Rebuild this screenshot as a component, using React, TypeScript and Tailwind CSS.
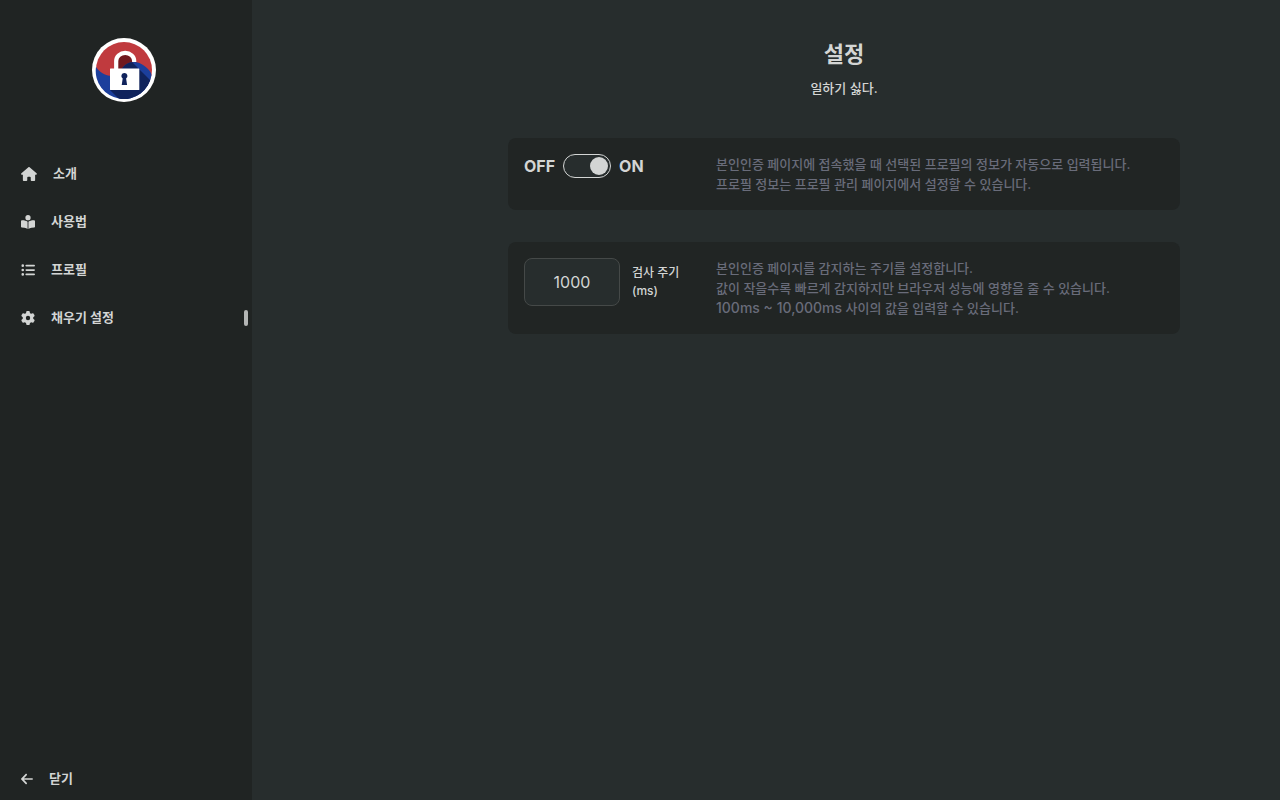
import { useState } from "react";
import type { ReactNode } from "react";
import { FaArrowLeft, FaBookOpenReader, FaGear, FaHouse, FaListUl } from "react-icons/fa6";

function Logo() {
  return (
    <svg viewBox="0 0 64 64" className="size-16" role="img" aria-label="로고">
      <defs>
        <clipPath id="blue">
          <path d="M4 29C10 38 22 41 28 34C33 23 44 22 51 27C56 30 59 34 59.500 37A28 28 0 0 1 4 29Z" />
        </clipPath>
      </defs>
      <circle cx="32" cy="32" r="32" fill="#fff" />
      <circle cx="32" cy="32" r="28" fill="#c03a3e" />
      <path d="M26 31V21Q33 12 40 21V24H44L51 31Z" fill="#70191f" />
      <path d="M4 29C10 38 22 41 28 34C33 23 44 22 51 27C56 30 59 34 59.500 37A28 28 0 0 1 4 29Z" fill="#1c3f9c" />
      <g clipPath="url(#blue)">
        <path d="M26 20L40 24L64 48V72H38L18 52V31H26Z" fill="#10235c" />
      </g>
      <path d="M24.200 32V23A9 8.200 0 0 1 42.200 23V24" fill="none" stroke="#fff" strokeWidth="4.200" />
      <rect x="18" y="30.500" width="29.300" height="21.500" rx="0.500" fill="#fff" />
      <path d="M32.400 35a3 3 0 0 1 1.700 5.500l1 6.500h-5.400l1-6.500A3 3 0 0 1 32.400 35Z" fill="#10235c" />
    </svg>
  );
}

type NavItemProps = { icon: ReactNode; label: string; active?: boolean };

function NavItem({ icon, label, active = false }: NavItemProps) {
  return (
    <a
      href="#"
      aria-current={active ? "page" : undefined}
      className="flex h-12 items-center gap-4 pl-[21px] text-[13px] font-bold"
    >
      {icon}
      <span>{label}</span>
      {active && <span className="ml-auto h-4 w-1 rounded-full bg-[#b4b6b5]" />}
    </a>
  );
}

function Card({ control, children }: { control: ReactNode; children: ReactNode }) {
  return (
    <section className="flex rounded-lg bg-[#212524] p-4">
      <div className="w-48 shrink-0">{control}</div>
      <div className="text-[13px] leading-5 font-medium text-[#696c7a]">{children}</div>
    </section>
  );
}

export default function App() {
  const [enabled, setEnabled] = useState(true);
  const [interval, setInterval] = useState("1000");

  return (
    <div className="flex min-h-screen bg-[#272d2d] font-['Inter','Noto_Sans_CJK_KR',sans-serif] text-[#d3d5d4]">
      <aside className="flex w-[252px] shrink-0 flex-col bg-[#202423] pr-1">
        <div className="flex justify-center pt-[38px] pb-12">
          <Logo />
        </div>
        <nav className="flex flex-col">
          <NavItem icon={<FaHouse className="h-3.5 w-4" />} label="소개" />
          <NavItem icon={<FaBookOpenReader className="size-3.5" />} label="사용법" />
          <NavItem icon={<FaListUl className="size-3.5" />} label="프로필" />
          <NavItem icon={<FaGear className="size-3.5" />} label="채우기 설정" active />
        </nav>
        <button type="button" className="mt-auto flex h-[42px] items-center gap-4 pl-[21px] text-[13px] font-bold">
          <FaArrowLeft className="h-3.5 w-3" />
          <span>닫기</span>
        </button>
      </aside>

      <main className="min-w-0 flex-1 pr-4 pl-64">
        <div className="max-w-2xl">
          <header className="pt-9 text-center">
            <h1 className="text-[22px] leading-9 font-bold">설정</h1>
            <p className="mt-1 text-[13px] leading-6 font-medium">일하기 싫다.</p>
          </header>

          <div className="mt-[38px] flex flex-col gap-8">
            <Card
              control={
                <label className="flex h-6 items-center gap-2 font-bold">
                  <span>OFF</span>
                  <input
                    type="checkbox"
                    role="switch"
                    aria-label="자동 입력"
                    checked={enabled}
                    onChange={(e) => setEnabled(e.target.checked)}
                    className="flex h-6 w-12 appearance-none items-center rounded-full border border-[#d3d5d4] bg-[#272d2d] px-0.5 before:size-[18px] before:rounded-full before:bg-[#d3d5d4] before:content-[''] checked:justify-end"
                  />
                  <span>ON</span>
                </label>
              }
            >
              <p>본인인증 페이지에 접속했을 때 선택된 프로필의 정보가 자동으로 입력됩니다.</p>
              <p>프로필 정보는 프로필 관리 페이지에서 설정할 수 있습니다.</p>
            </Card>

            <Card
              control={
                <div className="flex items-center gap-3">
                  <input
                    id="interval"
                    type="text"
                    inputMode="numeric"
                    value={interval}
                    onChange={(e) => setInterval(e.target.value)}
                    className="h-12 w-24 rounded-lg border border-[#454948] bg-[#272d2d] text-center text-base"
                  />
                  <label htmlFor="interval" className="text-[12px] leading-[18px] font-medium">
                    검사 주기
                    <br />
                    (ms)
                  </label>
                </div>
              }
            >
              <p>본인인증 페이지를 감지하는 주기를 설정합니다.</p>
              <p>값이 작을수록 빠르게 감지하지만 브라우저 성능에 영향을 줄 수 있습니다.</p>
              <p>
                <span className="text-sm">100ms ~ 10,000ms</span> 사이의 값을 입력할 수 있습니다.
              </p>
            </Card>
          </div>
        </div>
      </main>
    </div>
  );
}
